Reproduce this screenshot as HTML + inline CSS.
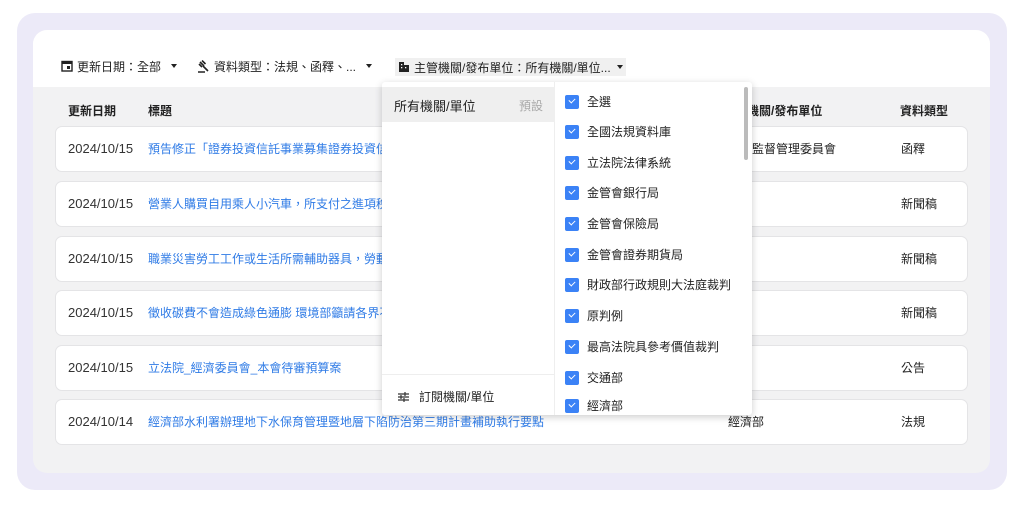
<!DOCTYPE html>
<html><head><meta charset="utf-8"><style>
*{box-sizing:border-box;margin:0;padding:0}
body{width:1024px;height:512px;background:#fff;font-family:"Liberation Sans","Noto Sans CJK TC",sans-serif;font-size:12px;color:#222;position:relative;overflow:hidden}
.frame{position:absolute;left:17px;top:13px;width:990px;height:477px;background:#eceaf8;border-radius:18px}
.card{position:absolute;left:33px;top:30px;width:957px;height:443px;background:#f2f2f3;border-radius:14px;overflow:hidden}
.tool{position:absolute;left:0;top:0;width:957px;height:57px;background:#fff}
.f{position:absolute;top:28px;font-size:12px;color:#222;display:flex;align-items:center;gap:4px;height:16px}
.tri{display:inline-block;width:0;height:0;border-left:3px solid transparent;border-right:3px solid transparent;border-top:4px solid #222;margin-left:6px}
.th{position:absolute;top:72px;font-weight:bold;font-size:12px}
.row{position:absolute;left:22px;width:913px;height:46px;background:#fff;border:1px solid #e4e4e6;border-radius:7px}
.row span{position:absolute;top:0;line-height:44px;font-size:12px}
.d{left:12px;color:#333;font-size:13px!important}.t{left:92px;color:#2f7be6}.o{left:672px}.k{left:845px}
.dd{position:absolute;left:382px;top:82px;width:370px;height:333px;background:#fff;box-shadow:0 2px 8px rgba(0,0,0,.2);border-radius:3px}
.lp{position:absolute;left:0;top:0;width:173px;height:333px;border-right:1px solid #eee}
.sel{position:absolute;left:0;top:5px;width:173px;height:35px;background:#efefef;font-size:13px}
.it{position:absolute;left:183px;font-size:12px;display:flex;align-items:center;gap:8px}
.cb{width:14px;height:14px;background:#3b82f6;border-radius:2px;position:relative}
.cb:after{content:"";position:absolute;left:4px;top:3px;width:5px;height:3px;border-left:1.5px solid #fff;border-bottom:1.5px solid #fff;transform:rotate(-45deg)}
</style></head><body>
<div class="frame"></div>
<div class="card">
<div class="tool">
<div class="f" style="left:28px"><svg width="12" height="12" viewBox="0 0 12 12"><rect x="1" y="1.5" width="10" height="9.5" fill="none" stroke="#222" stroke-width="1.4"/><rect x="1" y="1.5" width="10" height="2.5" fill="#222"/><rect x="6" y="6" width="3" height="3" fill="#222"/></svg>更新日期：全部<i class="tri"></i></div>
<div class="f" style="left:164px"><svg width="13" height="13" viewBox="0 0 13 13"><path d="M3 2l4 4M5 0.5l3.5 3.5M2 4l3 3M6 6l5 5M1 12h7" stroke="#222" stroke-width="1.6"/></svg>資料類型：法規、函釋、...<i class="tri"></i></div>
<div class="f" style="left:362px;background:#f0f0f0;padding:0 3px;height:18px"><svg width="12" height="12" viewBox="0 0 12 12"><path d="M1 11V1h5v3h5v7z" fill="#222"/><rect x="3" y="3" width="1.3" height="1.3" fill="#fff"/><rect x="3" y="6" width="1.3" height="1.3" fill="#fff"/><rect x="7" y="6" width="1.3" height="1.3" fill="#fff"/></svg>主管機關/發布單位：所有機關/單位...<i class="tri" style="margin-left:2px"></i></div>
</div>
<div class="th" style="left:35px">更新日期</div>
<div class="th" style="left:115px">標題</div>
<div class="th" style="left:690px">主管機關/發布單位</div>
<div class="th" style="left:867px">資料類型</div>
<div class="row" style="top:96px"><span class="d">2024/10/15</span><span class="t">預告修正「證券投資信託事業募集證券投資信</span><span class="o">金融監督管理委員會</span><span class="k">函釋</span></div>
<div class="row" style="top:151px"><span class="d">2024/10/15</span><span class="t">營業人購買自用乘人小汽車，所支付之進項稅</span><span class="k">新聞稿</span></div>
<div class="row" style="top:206px"><span class="d">2024/10/15</span><span class="t">職業災害勞工工作或生活所需輔助器具，勞動</span><span class="k">新聞稿</span></div>
<div class="row" style="top:260px"><span class="d">2024/10/15</span><span class="t">徵收碳費不會造成綠色通膨 環境部籲請各界不</span><span class="k">新聞稿</span></div>
<div class="row" style="top:315px"><span class="d">2024/10/15</span><span class="t">立法院_經濟委員會_本會待審預算案</span><span class="k">公告</span></div>
<div class="row" style="top:369px"><span class="d">2024/10/14</span><span class="t">經濟部水利署辦理地下水保育管理暨地層下陷防治第三期計畫補助執行要點</span><span class="o">經濟部</span><span class="k">法規</span></div>
</div>
<div class="dd">
<div class="lp">
<div class="sel"><span style="position:absolute;left:12px;top:9px">所有機關/單位</span><span style="position:absolute;left:137px;top:10px;color:#aaa;font-size:12px">預設</span></div>
<div style="position:absolute;left:0;top:292px;width:173px;border-top:1px solid #eee"></div>
<div style="position:absolute;left:16px;top:306px;display:flex;gap:10px;align-items:center"><svg width="11" height="10" viewBox="0 0 11 10"><path d="M0 2h11M0 5h11M0 8h11M7 0v4M3 3v4M6 6v4" stroke="#333" stroke-width="1.2"/></svg>訂閱機關/單位</div>
</div>
<div class="it" style="top:11px"><i class="cb"></i>全選</div>
<div class="it" style="top:41px"><i class="cb"></i>全國法規資料庫</div>
<div class="it" style="top:72px"><i class="cb"></i>立法院法律系統</div>
<div class="it" style="top:102px"><i class="cb"></i>金管會銀行局</div>
<div class="it" style="top:133px"><i class="cb"></i>金管會保險局</div>
<div class="it" style="top:164px"><i class="cb"></i>金管會證券期貨局</div>
<div class="it" style="top:194px"><i class="cb"></i>財政部行政規則大法庭裁判</div>
<div class="it" style="top:225px"><i class="cb"></i>原判例</div>
<div class="it" style="top:256px"><i class="cb"></i>最高法院具參考價值裁判</div>
<div class="it" style="top:287px"><i class="cb"></i>交通部</div>
<div class="it" style="top:315px"><i class="cb"></i>經濟部</div>
<div style="position:absolute;left:362px;top:5px;width:4px;height:73px;background:#bbb;border-radius:2px"></div>
</div>
</body></html>
